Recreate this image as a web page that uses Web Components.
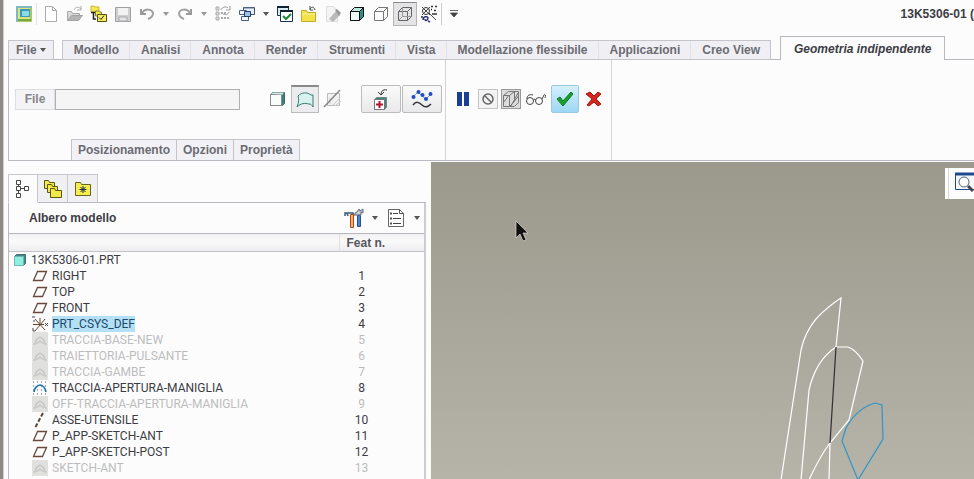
<!DOCTYPE html>
<html lang="it">
<head>
<meta charset="utf-8">
<title>13K5306-01</title>
<style>
html, body { margin: 0; height: 100%; }
body { font: 12px/16px "Liberation Sans", Arial, sans-serif; color: #3c3c44; background: #fcfcfc; overflow: hidden; }
</style>
</head>
<body>
<cad-app></cad-app>
<script>
const ICONS = {
  logo: [18, 18, '<path d="M1 1h16v16H1z" fill="#a9c95a"/><path d="M1 1h16v2H3v14H1z" fill="#7fb8c0"/><path d="M3 3h12v12H3z" fill="#dbe678"/><path d="M5 4h10v8H5z" fill="#3f97bd"/><path d="M7 6h7v5H7z" fill="#8adbe8"/><path d="M3 15h13" stroke="#74a84a" stroke-width="2"/>'],
  doc: [16, 18, '<path d="M2.500 1.500h7l4 4v11h-11z" fill="#fff" stroke="#aaa"/><path d="M9.500 1.500v4h4" fill="none" stroke="#aaa"/>'],
  open: [18, 18, '<path d="M1.500 15.500v-9h4l1 2h7v3" fill="#d8d8d8" stroke="#aaa"/><path d="M1.500 15.500l4-5h11l-4 5z" fill="#b4b4b4" stroke="#a2a2a2"/><path d="M8 5c2-4 5-3 7-1M15 1v4h-4" fill="none" stroke="#aaa"/>'],
  tree: [18, 18, '<path d="M1 1h3l1 1h4v5H1z" fill="#f2e856" stroke="#c8ba30"/><path d="M1 7.500h4M3.500 7v7H6" fill="none" stroke="#222" stroke-width="1.500"/><path d="M5.500 6h3l1 1h2v4h-6z" fill="#f2e856" stroke="#8a8020"/><path d="M7.500 9.500h9v7h-9z" fill="#f6ee60" stroke="#554c10"/><path d="M9 12.500l2 2 3-4" fill="none" stroke="#222"/>'],
  save: [18, 18, '<path d="M1.500 2.500h15v14h-15z" fill="#cfcfd2" stroke="#a0a0a4"/><path d="M4 3h10v7H4z" fill="#f2f2f2"/><path d="M5 12h8v4H5z" fill="#e4e4e4" stroke="#aaa"/>'],
  undo: [18, 16, '<path d="M3 3v5h5" fill="none" stroke="#999" stroke-width="2"/><path d="M4 7c3-5 10-4 11 0 0 3-2 5-5 6" fill="none" stroke="#a0a0a0" stroke-width="2"/>'],
  redo: [18, 16, '<path d="M15 3v5h-5" fill="none" stroke="#999" stroke-width="2"/><path d="M14 7C11 2 4 3 3 7c0 3 2 5 5 6" fill="none" stroke="#a0a0a0" stroke-width="2"/>'],
  caret: [8, 6, '<path d="M1 1h6L4 5z" fill="#555"/>'],
  caretGrey: [8, 6, '<path d="M1 1h6L4 5z" fill="#999"/>'],
  caretBar: [10, 8, '<path d="M1 .5h8M1.500 3h7L5 7z" fill="#444" stroke="#444" stroke-width=".8"/>'],
  regen: [18, 18, '<path d="M2 2h3v3H2zM2 7h3v3H2zM2 12h3v3H2z" fill="#ddd" stroke="#aaa"/><path d="M7 8h6M7 13h8" stroke="#aaa" stroke-width="2" stroke-dasharray="2 1"/><path d="M7 5c1-3 5-4 7-2M16 1v4h-4M15 7c-1 3-4 3-6 2" fill="none" stroke="#999"/>'],
  windows: [18, 18, '<path d="M5.500 2.500h11v7h-11z" fill="#e8eef6" stroke="#38506e"/><path d="M6 3h10" stroke="#5d7896" stroke-width="1"/><path d="M1.500 5.500h7v4h-7zM3.500 11.500h7v4h-7z" fill="#f4f8fc" stroke="#46607e"/><path d="M6.500 6.500h6v5h-6z" fill="#9cc4ea" stroke="#254060"/>'],
  winCheck: [18, 18, '<path d="M1.500 1.500h11v9h-11z" fill="#d7ebf2" stroke="#1d3548"/><path d="M1 2h12" stroke="#123" stroke-width="2"/><path d="M4.500 5.500h12v11h-12z" fill="#fff" stroke="#1d3548"/><path d="M4 6h13" stroke="#123" stroke-width="2"/><path d="M7 11l3 3 5-5" fill="none" stroke="#1a8a3a" stroke-width="2"/>'],
  folder: [18, 18, '<path d="M1.500 16.500v-11h5l1 2h8v9z" fill="#f2e14a" stroke="#c4ac28"/><path d="M2 9h13" stroke="#fbf4a0"/><path d="M10 4c2-3 4-2 5 1M10 1v4h3" fill="none" stroke="#444"/>'],
  pageEdit: [18, 18, '<path d="M2.500 1.500h7l4 4v11h-11z" fill="#f4f4f4" stroke="#ddd"/><path d="M5 14l7-8 4 4-7 7z" fill="#bbb"/><path d="M11 5l2-1 4 4-2 3z" fill="#999"/>'],
  cubeShade: [18, 18, '<path d="M2.500 6.500l4-4h9v9l-4 4h-9z" fill="#bfe8e0" stroke="#111"/><path d="M11.500 6.500l4-4v9l-4 4z" fill="#2f8f84" stroke="#111"/><path d="M2.500 6.500h9v9h-9z" fill="#eefaf8" stroke="#111"/>'],
  cubeLine: [18, 18, '<path d="M2.500 6.500l4-4h9v9l-4 4h-9zM2.500 6.500h9v9M11.500 6.500l4-4" fill="#fdfdfd" stroke="#777"/>'],
  cubeWire: [18, 18, '<path d="M2.500 6.500l4-4h9v9l-4 4h-9zM2.500 6.500h9v9M11.500 6.500l4-4" fill="none" stroke="#666"/><path d="M6.500 2.500v9h9M6.500 11.500l-4 4" fill="none" stroke="#999"/>'],
  datum: [18, 18, '<circle cx="6" cy="6" r="3.500" fill="none" stroke="#333"/><path d="M9 8l7 7M2 2l8 8M10 2L2 10" stroke="#444"/><path d="M11 1.500h2M15 1.500h2M11 4.500h1M14 5.500h2M1 12h2M12 9h5" stroke="#333" stroke-width="1.500"/><path d="M3 15c0-4 5-4 5-2s-3 4-3 1M8 16l2 1" fill="none" stroke="#2a2f78" stroke-width="1.500"/>'],
  solid: [18, 18, '<path d="M2.500 4.500l2-2h12v11l-2 2h-12z" fill="#3c8076" stroke="#3a6a64"/><path d="M2.500 4.500h11v11h-11z" fill="#f8fcfb" stroke="#888"/><path d="M3 4l2-1.500h11l-1.500 2z" fill="#d4ece8"/>'],
  surface: [20, 18, '<path d="M2 16C4 11 4 8 3 5c4-4 9-4 13-1h2v12c-1-2-2-3-4-3-4-1-8-1-12 3z" fill="#d8f3ee" stroke="#3c7a72"/>'],
  strip: [20, 20, '<path d="M4.500 4.500h12v12h-12z" fill="#f1f1f1" stroke="#bbb"/><path d="M10 16l7-7M12 17l6-5M7 15V9" stroke="#ccc"/><path d="M1 18L17 1" stroke="#888" stroke-width="1.500"/>'],
  place: [20, 22, '<path d="M3.500 11.500l2-2h10v10l-2 2h-10z" fill="#4b827b" stroke="#6a8a86"/><path d="M3.500 11.500h10v10h-10z" fill="#fff" stroke="#777"/><path d="M8.500 13v7M5 16.500h7" stroke="#b0182e" stroke-width="2"/><path d="M16 2c-5-1-6 2-6 5M7 4l3 3 3-3" fill="none" stroke="#333"/>'],
  points: [22, 20, '<path d="M2 8l5-5 4 4 4 3 5-5" fill="none" stroke="#6f94cc"/><g fill="#1e4fc0"><circle cx="2.500" cy="8" r="2"/><circle cx="7.500" cy="3" r="2"/><circle cx="11.500" cy="6" r="2"/><circle cx="15" cy="10" r="2"/><circle cx="19.500" cy="5" r="2"/></g><path d="M2 16c3-4 6-3 9 0 3 3 6 2 9-1" fill="none" stroke="#333" stroke-width="1.500"/>'],
  pause: [14, 16, '<path d="M1 1h5v14H1zM8 1h5v14H8z" fill="#1b3f93"/>'],
  none: [14, 14, '<circle cx="7" cy="7" r="5" fill="none" stroke="#666" stroke-width="1.500"/><path d="M3.500 3.500l7 7" stroke="#666" stroke-width="1.500"/>'],
  preview: [18, 18, '<path d="M1.500 5.500l5-4h10v11l-4 4h-11zM1.500 5.500h6v11M7.500 5.500l5-4v10l-5 5M12.500 11l4-5M2 12l5-7M9 16l7-13" fill="none" stroke="#777"/>'],
  glasses: [22, 14, '<g fill="none" stroke="#444"><circle cx="5" cy="9" r="3.500"/><circle cx="14" cy="9" r="3.500"/><path d="M8.500 8c0-1 2-1 2 0M2 7c0-4 3-5 6-4M17 7l2-4c1-1 2 0 1 3"/></g>'],
  check: [18, 16, '<path d="M1 8l3-2 3 4 8-9 2 2L7 15z" fill="#19a02c" stroke="#0e7a1f"/>'],
  cross: [18, 16, '<path d="M1 3l4-2 4 4 4-4 3 2-5 5 5 5-3 2-4-4-5 4-2-1 5-6z" fill="#d3261e" stroke="#a8180f"/>'],
  nodes: [14, 20, '<path d="M.5 1.500h4v4h-4zM.5 7.500h4v4h-4zM.5 14.500h4v4h-4zM8.500 7.500h4v4h-4z" fill="#fff" stroke="#444"/><path d="M2.500 5.500v2M2.500 11.500v3M4.500 9.500h4" stroke="#444"/>'],
  folders: [20, 20, '<g fill="#f3ea4a" stroke="#5c5518"><path d="M1.500 9.500v-8h4l1 2h5v6z"/><path d="M4.500 13.500v-8h4l1 2h5v6z"/><path d="M7.500 18.500v-9h4l1 2h6v7z"/></g>'],
  favorite: [18, 16, '<path d="M1.500 14.500v-13h5l1 2h9v11z" fill="#f6ee4c" stroke="#6a6220"/><path d="M9 5v7M5.500 8.500h7M6.500 6l5 5M11.500 6l-5 5" stroke="#1f2a50"/>'],
  tools: [20, 20, '<path d="M1 8V5h8l1 3M3 5l1 3" fill="none" stroke="#3a5a74" stroke-width="1.500"/><path d="M6.500 6.500h3v13h-3z" fill="#f0b070" stroke="#b04a1c"/><path d="M13.500 7.500h3v11h-3z" fill="#4f82cc" stroke="#2a4f90"/><path d="M11 7h6V4l2 1V1l-3 2-1-2-2 3-2 1z" fill="#c4cdd6" stroke="#667"/>'],
  list: [18, 20, '<path d="M1.500 1.500h11l4 4v13h-15z" fill="#fff" stroke="#666"/><path d="M12.500 1.500v4h4" fill="none" stroke="#555"/><path d="M6 5.500h5M6 10.500h8M6 15.500h8" stroke="#444"/><path d="M3 4.500h2v2H3zM3 9.500h2v2H3zM3 14.500h2v2H3z" fill="#555"/>'],
  part: [14, 14, '<path d="M1.500 3.500l2-2h9v9l-2 2z" fill="#3c8d86" stroke="#567"/><path d="M1.500 3.500h9v9h-9z" fill="#8ff0e2" stroke="#6fb8b0"/>'],
  plane: [16, 14, '<path d="M5.500 2.500h9l-4 9h-9z" fill="none" stroke="#6a4a3c" stroke-width="1.300"/>'],
  csys: [16, 16, '<path d="M1 8.500h11M3 3l10 11M3 15L13 3M8 2v6" stroke="#6a4630"/><path d="M0 1h3M1 5h2M1 12v3h2M13 7l3 3M16 7l-3 3" stroke="#444" fill="none"/>'],
  hidden: [16, 16, '<path d="M0 0h16v16H0z" fill="#e0e0de"/><path d="M2 13l3-6 3-2 3 2 3 6M4 12l4-3 4 3" fill="none" stroke="#c4c4c2" stroke-width="1.300"/>'],
  sketch: [16, 16, '<path d="M1 2h14M1 6h14M1 10h14M1 14h14" stroke="#555" stroke-dasharray="1 3"/><path d="M2 12c0-3 3-7 6-7 3 0 5 3 6 7" fill="none" stroke="#1f78b4" stroke-width="1.700"/>'],
  axis: [16, 16, '<path d="M11 1L3 16" stroke="#5a4638" stroke-width="2" stroke-dasharray="4 2"/>'],
  zoomWin: [20, 20, '<path d="M1.500 1.500h20v16h-20z" fill="#f4f8fc" stroke="#1c4a8c"/><path d="M1 2h20" stroke="#1c4a8c" stroke-width="3"/><circle cx="10" cy="10" r="5" fill="#fff" stroke="#566"/><path d="M14 14l5 5" stroke="#445" stroke-width="3"/>'],
  cursor: [14, 22, '<path d="M1 1v17l4-4 3 7 3-1-3-7h5z" fill="#111" stroke="#eee" stroke-width=".6"/>']
};

class Base extends HTMLElement {
  connectedCallback() {
    if (!this.shadowRoot) this.attachShadow({ mode: 'open' }).innerHTML = this.render();
  }
}
const attr = (el, n) => el.getAttribute(n) || '';

customElements.define('cad-icon', class extends Base {
  render() {
    const [w, h, body] = ICONS[attr(this, 'name')];
    return `<style>:host{display:inline-flex;flex:none}svg{display:block}</style><svg width="${w}" height="${h}" viewBox="0 0 ${w} ${h}" aria-hidden="true">${body}</svg>`;
  }
});

customElements.define('tool-button', class extends Base {
  render() {
    return `<style>
      :host{display:block;flex:none}
      button{display:flex;align-items:center;justify-content:center;box-sizing:border-box;width:24px;height:24px;padding:0;border:1px solid transparent;background:none}
      :host([kind=caret]) button{width:14px}
      :host([kind=pressed]) button{background:#e4e4e6;border-color:#b4b4b6;border-top-color:#888}
      :host([kind=surface]) button{width:28px;height:28px;background:#ebecee;border-color:#bbb;border-top:2px solid #888}
      :host([kind=wide]) button{width:40px;height:28px;background:linear-gradient(#fafafa,#e9e9eb);border-color:#bcbcbc;border-radius:2px}
      :host([kind=small]) button{width:20px;height:20px;background:#f3f3f3;border-color:#c4c4c4}
      :host([kind=smallOn]) button{width:20px;height:20px;background:#dcdcdc;border-color:#999}
      :host([kind=ok]) button{width:28px;height:28px;background:linear-gradient(#d6f0fc,#9cd6f4);border-color:#9cc8e0;border-radius:2px}
    </style><button aria-label="${attr(this, 'label')}"><cad-icon name="${attr(this, 'icon')}"></cad-icon></button>`;
  }
});

const tool = (icon, label, kind = '') => `<tool-button icon="${icon}" label="${label}" kind="${kind}"></tool-button>`;

customElements.define('quick-toolbar', class extends Base {
  render() {
    return `<style>
      :host{display:flex;align-items:center;height:28px;padding:0 0 2px 8px}
      i{width:1px;height:22px;background:#ccc} .first{margin-right:2px;background:#e4e4e4}
      h1{font:bold 12px/16px "Liberation Sans",sans-serif;margin:0 0 0 auto;white-space:nowrap}
    </style>
    ${tool('logo', 'Creo')}<i class="first"></i>${tool('doc', 'Nuovo')}${tool('open', 'Apri')}${tool('tree', 'Albero')}${tool('save', 'Salva')}
    ${tool('undo', 'Annulla')}${tool('caretGrey', 'Elenco annulla', 'caret')}${tool('redo', 'Ripeti')}${tool('caretGrey', 'Elenco ripeti', 'caret')}
    ${tool('regen', 'Rigenera')}${tool('windows', 'Finestre')}${tool('caret', 'Elenco finestre', 'caret')}${tool('winCheck', 'Attiva')}${tool('folder', 'Cartella')}
    ${tool('pageEdit', 'Modifica')}${tool('cubeShade', 'Ombreggiato')}${tool('cubeLine', 'Linee')}${tool('cubeWire', 'Wireframe', 'pressed')}${tool('datum', 'Riferimenti')}<i></i>${tool('caretBar', 'Personalizza')}
    <h1>13K5306-01 (</h1>`;
  }
});

customElements.define('ribbon-tabs', class extends Base {
  render() {
    const tabs = ['Modello', 'Analisi', 'Annota', 'Render', 'Strumenti', 'Vista', 'Modellazione flessibile', 'Applicazioni', 'Creo View'];
    return `<style>
      :host{display:flex;align-items:flex-end;height:30px;background:linear-gradient(#b8b8be,#b8b8be) bottom/100% 1px no-repeat}
      button{font:bold 12px/16px "Liberation Sans",sans-serif;color:#6b6b72;margin:0;white-space:nowrap;background:none;border:0;padding:0 10px 0 11px;height:18px}
      .file{display:flex;align-items:center;gap:2px;height:20px;padding:0 6px 0 7px;border:1px solid #c4c4ca;background:#f0f0f4;margin-right:8px}
      nav{display:flex;border:1px solid #c4c4ca;background:#f0f0f4}
      nav button+button{border-left:1px solid #e0e0e6}
      .active{height:24px;margin-left:9px;padding:0 13px;color:#3c3c44;font-style:italic;background:#fcfcfc;border:1px solid #b8b8be;border-bottom:0}
    </style><button class="file">File<cad-icon name="caret"></cad-icon></button><nav>${tabs.map(t => `<button>${t}</button>`).join('')}</nav><button class="active">Geometria indipendente</button>`;
  }
});

customElements.define('ribbon-panel', class extends Base {
  render() {
    return `<style>
      :host{display:flex;border:1px solid #b8b8be;border-top:0;border-right:0;min-height:101px;box-sizing:border-box}
      section{border-right:1px solid #d4d4d4;display:flex;flex-direction:column;justify-content:space-between}
      .row{display:flex;align-items:center;height:28px;padding-top:25px}
      .main{width:436px} .row.a{padding-left:6px}
      label{box-sizing:border-box;width:40px;height:21px;border:1px solid #dedee0;background:#f4f4f6;font:bold 12px/19px "Liberation Sans",sans-serif;color:#85858c;text-align:center}
      input{box-sizing:border-box;width:185px;height:21px;border:1px solid #b0b0b0;background:#f5f5f5;padding:0 4px;margin-right:25px}
      .group{display:flex;align-items:center;gap:2px}
      .group+.group{margin-left:16px;gap:1px}
      .sub{display:flex;padding-left:62px}
      .sub button{font:bold 12px/16px "Liberation Sans",sans-serif;color:#6b6b72;height:21px;margin:0;padding:0 6px;border:1px solid #c4c4ca;border-bottom:0;border-right:0;background:#f2f2f6}
      .sub button:last-child{border-right:1px solid #c4c4ca}
      .row.b{padding:25px 5px 0 5px;gap:3px}
    </style>
    <section class="main"><div class="row a"><label for="f">File</label><input id="f">
      <div class="group">${tool('solid', 'Solido')}${tool('surface', 'Superficie', 'surface')}${tool('strip', 'Rimuovi materiale')}</div><div class="group">${tool('place', 'Posiziona', 'wide')}${tool('points', 'Punti', 'wide')}</div></div>
      <div class="sub"><button>Posizionamento</button><button>Opzioni</button><button>Proprietà</button></div></section>
    <section><div class="row b">${tool('pause', 'Pausa')}${tool('none', 'Nessuna anteprima', 'small')}${tool('preview', 'Anteprima', 'smallOn')}${tool('glasses', 'Verifica')}${tool('check', 'Conferma', 'ok')}${tool('cross', 'Chiudi')}</div></section>`;
  }
});

customElements.define('tree-label', class extends Base {
  render() {
    return `<style>
      :host{display:flex;align-items:center;height:16px;gap:4px;white-space:nowrap}
      :host([selected]) span{background:#b4e0f6;color:#20486a}
    </style><cad-icon name="${attr(this, 'icon')}"></cad-icon><span><slot></slot></span>`;
  }
});

customElements.define('model-tree', class extends Base {
  render() {
    const rows = [['plane', 'RIGHT'], ['plane', 'TOP'], ['plane', 'FRONT'], ['csys', 'PRT_CSYS_DEF'], ['hidden', 'TRACCIA-BASE-NEW'], ['hidden', 'TRAIETTORIA-PULSANTE'], ['hidden', 'TRACCIA-GAMBE'], ['sketch', 'TRACCIA-APERTURA-MANIGLIA'], ['hidden', 'OFF-TRACCIA-APERTURA-MANIGLIA'], ['axis', 'ASSE-UTENSILE'], ['plane', 'P_APP-SKETCH-ANT'], ['plane', 'P_APP-SKETCH-POST'], ['hidden', 'SKETCH-ANT']];
    return `<style>
      :host{display:flex;flex-direction:column;padding-top:12px}
      .tabs{display:flex;height:29px}
      .tabs button{box-sizing:border-box;width:30px;height:29px;padding:0;border:1px solid #c8c8cc;border-left:0;background:#f0f0f2;display:flex;align-items:center;justify-content:center;border-bottom-color:#b8b8be}
      .tabs button:first-child{border-left:1px solid #c8c8cc;background:#fcfcfc;border-bottom-color:transparent}
      .tabs span{flex:1;border-bottom:1px solid #b8b8be}
      .box{flex:1;border:1px solid #b8b8be;border-width:0 2px 0 1px;border-right-color:#ccc}
      header{display:flex;align-items:center;height:30px;padding-left:20px}
      h2{font:bold 12px/16px "Liberation Sans",sans-serif;margin:0 auto 0 0}
      header tool-button[kind=caret]{margin-left:2px} header tool-button[icon=list]{margin-left:2px}
      table{border-collapse:collapse;width:100%;table-layout:fixed}
      th{box-sizing:border-box;height:18px;padding:2px 0 0 7px;font:bold 12px/15px "Liberation Sans",sans-serif;text-align:left;color:#55555c;background:linear-gradient(#f2f2f3,#fafafa 40%,#ececee);border-top:1px solid #b8b8be;border-bottom:1px solid #c4c4c8}
      th+th{border-left:1px solid #e0e0e2}
      th:last-child{width:85px}
      td{height:16px;padding:0;font:12px/16px Roboto,"Liberation Sans",sans-serif}
      td:first-child{padding-left:23px}
      td:last-child{padding-right:40px;text-align:center}
      .root td:first-child{padding-left:4px}
      .off td{color:#bcbcbe}
    </style>
    <div class="tabs"><button aria-label="Albero modello"><cad-icon name="nodes"></cad-icon></button><button aria-label="Cartelle"><cad-icon name="folders"></cad-icon></button><button aria-label="Preferiti"><cad-icon name="favorite"></cad-icon></button><span></span></div>
    <div class="box"><header><h2>Albero modello</h2>${tool('tools', 'Impostazioni')}${tool('caret', 'Elenco impostazioni', 'caret')}${tool('list', 'Mostra')}${tool('caret', 'Elenco mostra', 'caret')}</header>
    <table><thead><tr><th></th><th>Feat n.</th></tr></thead><tbody>
    <tr class="root"><td><tree-label icon="part">13K5306-01.PRT</tree-label></td><td></td></tr>
    ${rows.map(([i, t], n) => `<tr class="${i === 'hidden' ? 'off' : ''}"><td><tree-label icon="${i}" ${i === 'csys' ? 'selected' : ''}>${t}</tree-label></td><td>${n + 1}</td></tr>`).join('')}
    </tbody></table></div>`;
  }
});

customElements.define('model-view', class extends Base {
  render() {
    return `<style>
      :host{display:block;position:relative;overflow:hidden;background:linear-gradient(#9b998c,#b6b4a9)}
      .sketch{position:absolute;left:330px;top:118px}
      .cursor{position:absolute;left:84px;top:58px}
      .bar{position:absolute;right:0;top:6px;box-sizing:border-box;width:29px;height:31px;padding:4px 0 0 9px;background:linear-gradient(90deg,#fff 3px,#d8d8d8 3px,#d8d8d8 4px,#fcfcfc 4px);overflow:hidden}
      .bar button{border:0;padding:0;background:none;display:block}
    </style>
    <svg class="sketch" width="150" height="200" viewBox="761 280 150 200" fill="none" stroke="#fff" stroke-width="1.200">
      <path d="M781 480L801 350Q805 332 816 319Q827 307 841 298L836 347M830 443L829 480"/>
      <path d="M801 480L809 390Q816 360 836 347H848Q856 350 863 361L849 420L830 443Q820 456 809 480"/>
      <path d="M836 347L830 443" stroke="#333"/>
      <path d="M858 480L842 441L846 428Q857 408 875 403L882 405L883 439L858 480" stroke="#2f96c8"/>
    </svg>
    <cad-icon class="cursor" name="cursor"></cad-icon>
    <div class="bar"><button aria-label="Zoom"><cad-icon name="zoomWin"></cad-icon></button></div>`;
  }
});

customElements.define('cad-app', class extends Base {
  render() {
    return `<style>
      :host{display:flex;flex-direction:column;box-sizing:border-box;height:100vh;border-left:3px solid #8c8886;overflow:hidden}
      .in{flex:1;display:flex;flex-direction:column;min-height:0;border-left:1px solid #d0d0d0}
      .ribbon{padding-left:4px}
      .work{flex:1;display:flex;min-height:0;padding-top:1px}
      model-tree{flex:0 0 418px;margin:0 5px 0 4px;min-width:0}
      model-view{flex:1}
    </style><div class="in"><quick-toolbar></quick-toolbar><div class="ribbon"><ribbon-tabs></ribbon-tabs><ribbon-panel></ribbon-panel></div>
    <div class="work"><model-tree></model-tree><model-view></model-view></div></div>`;
  }
});
</script>
</body>
</html>
